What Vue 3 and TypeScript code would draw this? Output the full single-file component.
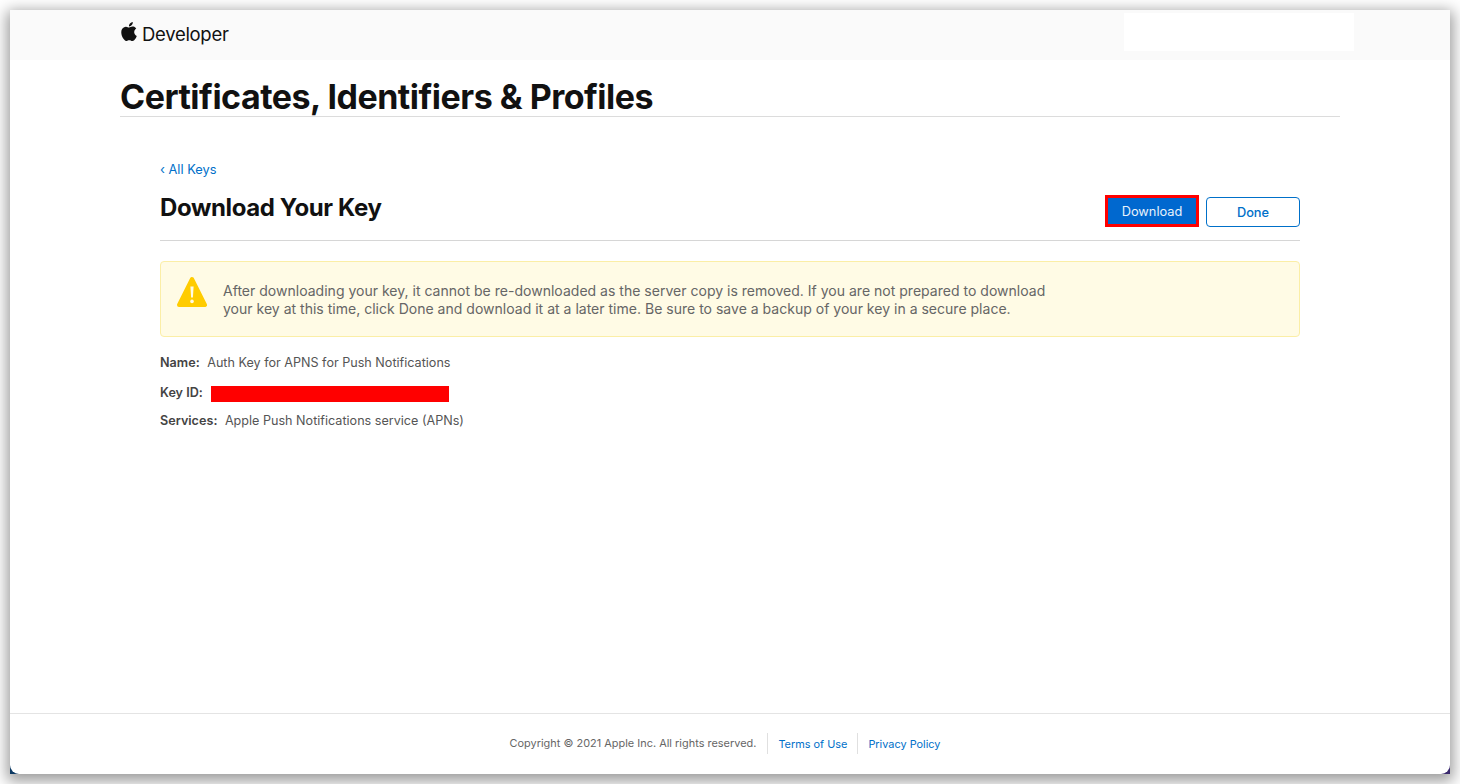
<script setup lang="ts">
interface Detail {
  label: string;
  value?: string;
}

const details: Detail[] = [
  { label: 'Name:', value: 'Auth Key for APNS for Push Notifications' },
  { label: 'Key ID:' },
  { label: 'Services:', value: 'Apple Push Notifications service (APNs)' },
];
</script>

<template>
  <div class="desktop">
    <div class="window">
      <div class="page">
        <header class="globalnav">
          <a class="brand">
            <svg class="apple" viewBox="2 0 20 24" aria-hidden="true">
              <path d="M12.152 6.896c-.948 0-2.415-1.078-3.96-1.04-2.04.027-3.91 1.183-4.961 3.014-2.117 3.675-.546 9.103 1.519 12.09 1.013 1.454 2.208 3.09 3.792 3.039 1.52-.065 2.09-.987 3.935-.987 1.831 0 2.35.987 3.96.948 1.637-.026 2.676-1.48 3.676-2.948 1.156-1.688 1.636-3.325 1.662-3.415-.039-.013-3.182-1.221-3.22-4.857-.026-3.04 2.48-4.494 2.597-4.559-1.429-2.09-3.623-2.324-4.39-2.376-2-.156-3.675 1.09-4.61 1.09zM15.53 3.83c.843-1.012 1.4-2.427 1.245-3.83-1.207.052-2.662.805-3.532 1.818-.78.896-1.454 2.338-1.273 3.714 1.338.104 2.715-.688 3.559-1.701" />
            </svg>
            <span>Developer</span>
          </a>
          <div class="account-mask"></div>
        </header>

        <div class="section-head">
          <h1>Certificates, Identifiers &amp; Profiles</h1>
        </div>

        <main class="content">
          <a class="back">‹ All Keys</a>
          <div class="title-row">
            <h2>Download Your Key</h2>
            <div class="actions">
              <button class="btn primary" type="button">Download</button>
              <button class="btn outline" type="button">Done</button>
            </div>
          </div>

          <div class="alert">
            <svg class="warn" viewBox="0 0 30 32" aria-hidden="true">
              <path d="M15 3 L28 29 H2 Z" fill="#ffcc00" stroke="#ffcc00" stroke-width="4" stroke-linejoin="round" />
              <path d="M13.4 10.5h3.2l-.7 11h-1.8z" fill="#fffbe6" />
              <circle cx="15" cy="25.4" r="1.8" fill="#fffbe6" />
            </svg>
            <p>
              After downloading your key, it cannot be re-downloaded as the server copy is removed. If you are not prepared to download<br />
              your key at this time, click Done and download it at a later time. Be sure to save a backup of your key in a secure place.
            </p>
          </div>

          <dl class="details">
            <div v-for="item in details" :key="item.label" class="detail">
              <dt>{{ item.label }}</dt>
              <dd v-if="item.value">{{ item.value }}</dd>
              <dd v-else class="redacted"></dd>
            </div>
          </dl>
        </main>

        <footer class="footer">
          <span class="copyright">Copyright © 2021 Apple Inc. All rights reserved.</span>
          <a class="footer-link">Terms of Use</a>
          <a class="footer-link">Privacy Policy</a>
        </footer>
      </div>
    </div>
  </div>
</template>

<style>
html,
body {
  margin: 0;
  background: #fff;
}
</style>

<style scoped>
.desktop {
  box-sizing: border-box;
  width: 1460px;
  height: 784px;
  padding: 10px;
  overflow: hidden;
  font-family: Inter, "Liberation Sans", sans-serif;
  background: #fff;
}

.window {
  height: 764px;
  background: linear-gradient(to right, #0d3a63, #3b2a6e);
  box-shadow: 0 4px 14px 3px rgba(0, 0, 0, 0.4);
}

.page {
  display: flex;
  flex-direction: column;
  height: 100%;
  background: #fff;
  border-radius: 0 0 9px 9px;
  overflow: hidden;
}

.globalnav {
  display: flex;
  align-items: flex-start;
  justify-content: space-between;
  flex: none;
  height: 50px;
  padding: 3px 96px 0 111px;
  box-sizing: border-box;
  background: #fafafa;
}

.brand {
  display: flex;
  align-items: center;
  gap: 5px;
  height: 42px;
  color: #111;
  font-size: 18.5px;
  letter-spacing: -0.3px;
}

.apple {
  width: 16px;
  height: 19px;
  margin-top: -5px;
  fill: #111;
}

.account-mask {
  width: 230px;
  height: 38px;
  background: #fff;
}

.section-head {
  margin: 0 110px;
  height: 56px;
  flex: none;
  border-bottom: 1px solid #dcdcdc;
}

h1 {
  margin: 0;
  padding-top: 16px;
  color: #111;
  font-size: 34px;
  line-height: 42px;
  font-weight: 700;
  letter-spacing: -0.5px;
  white-space: nowrap;
}

.content {
  flex: 1;
  padding: 45px 150px 0;
}

.back {
  display: block;
  color: #0070c9;
  font-size: 12.8px;
  line-height: 16px;
}

.title-row {
  display: flex;
  align-items: flex-start;
  justify-content: space-between;
  height: 56px;
  margin-top: 7px;
  border-bottom: 1px solid #d6d6d6;
  box-sizing: border-box;
}

h2 {
  margin: 0;
  padding-top: 8px;
  color: #111;
  font-size: 24px;
  line-height: 30px;
  font-weight: 650;
  letter-spacing: -0.38px;
}

.actions {
  display: flex;
  align-items: flex-end;
  gap: 7px;
  padding-top: 10px;
}

.btn {
  box-sizing: border-box;
  width: 94px;
  font-family: inherit;
  font-size: 12.8px;
  padding: 0;
}

.primary {
  height: 32px;
  color: #e8f2fb;
  background: #0068cf;
  border: 3px solid #f00;
  border-radius: 0;
}

.outline {
  height: 30px;
  color: #0070c9;
  font-weight: 500;
  background: #fff;
  border: 1px solid #0070c9;
  border-radius: 4px;
}

.alert {
  display: flex;
  box-sizing: border-box;
  height: 76px;
  margin-top: 20px;
  padding: 14px 16px 0;
  gap: 16px;
  background: #fffbe5;
  border: 1px solid #fbeea6;
  border-radius: 4px;
}

.warn {
  flex: none;
  width: 30px;
  height: 32px;
}

.alert p {
  margin: 6px 0 0;
  color: #666;
  font-size: 14.04px;
  line-height: 18px;
  white-space: nowrap;
}

.details {
  margin: 17px 0 0;
}

.detail {
  display: flex;
  align-items: center;
  gap: 7.5px;
  height: 16px;
  margin-bottom: 13px;
  font-size: 12.6px;
  color: #555;
}

.detail:nth-child(2) {
  margin-bottom: 12px;
  margin-top: 14px;
}

dt {
  font-weight: 600;
  color: #444;
  letter-spacing: 0.02px;
}

dd {
  margin: 0;
}

.redacted {
  width: 238px;
  height: 16px;
  margin: 4px 0 0 1px;
  background: #f00;
}

.footer {
  display: flex;
  align-items: center;
  justify-content: center;
  flex: none;
  height: 61px;
  padding-bottom: 1px;
  box-sizing: border-box;
  border-top: 1px solid #e4e4e4;
  font-size: 10.9px;
  color: #666;
}

.copyright {
  padding-right: 11px;
  margin-top: -1px;
  letter-spacing: 0.02px;
}

.footer-link {
  display: flex;
  align-items: center;
  height: 20px;
  padding: 1px 10px 0;
  color: #0070c9;
  border-left: 1px solid #e0e0e0;
}
</style>
